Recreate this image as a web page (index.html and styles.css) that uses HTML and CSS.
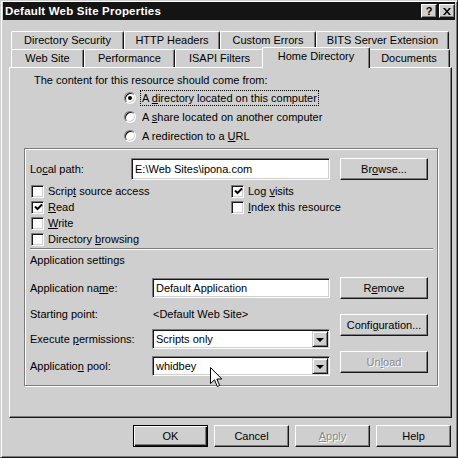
FILE: index.html
```html
<!DOCTYPE html>
<html>
<head>
<meta charset="utf-8">
<title>Default Web Site Properties</title>
<link rel="stylesheet" href="styles.css">
</head>
<body>
<div class="window">
  <div class="titlebar">
    <span class="title">Default Web Site Properties</span>
    <div class="caption-btns">
      <span class="cbtn help">?</span>
      <span class="cbtn close"><svg width="8" height="7" viewBox="0 0 8 7"><path d="M0 0h2l2 2.4L6 0h2L5 3.5 8 7H6L4 4.6 2 7H0l3-3.5z"/></svg></span>
    </div>
  </div>
  <div class="client">
    <div class="tabs">
      <div class="tab-row">
        <div class="tab w113">Directory Security</div>
        <div class="tab w96">HTTP Headers</div>
        <div class="tab w96">Custom Errors</div>
        <div class="tab w133">BITS Server Extension</div>
      </div>
      <div class="tab-row">
        <div class="tab w73">Web Site</div>
        <div class="tab w91">Performance</div>
        <div class="tab w89">ISAPI Filters</div>
        <div class="tab sel">Home Directory</div>
        <div class="tab w82">Documents</div>
      </div>
    </div>
    <div class="panel">
      <p class="intro">The content for this resource should come from:</p>
      <div class="radios">
        <div class="radio-row"><span class="radio on"></span><span class="focus">A <u>d</u>irectory located on this computer</span></div>
        <div class="radio-row"><span class="radio"></span><span class="rtext">A <u>s</u>hare located on another computer</span></div>
        <div class="radio-row"><span class="radio"></span><span class="rtext">A redirection to a <u>U</u>RL</span></div>
      </div>
      <div class="groupbox">
        <div class="path-row">
          <span class="path-label">Lo<u>c</u>al path:</span>
          <div class="field path-field">E:\Web Sites\ipona.com</div>
          <div class="btn side-btn"><span>Br<u>o</u>wse...</span></div>
        </div>
        <div class="checks">
          <div class="check"><span class="cb"></span><span>Scrip<u>t</u> source access</span></div>
          <div class="check"><span class="cb on"><svg width="9" height="9" viewBox="0 0 9 9"><path d="M1 3.5l2.5 2.5L8 1.5" fill="none" stroke="#000" stroke-width="2"/></svg></span><span><u>R</u>ead</span></div>
          <div class="check"><span class="cb"></span><span><u>W</u>rite</span></div>
          <div class="check"><span class="cb"></span><span>Directory <u>b</u>rowsing</span></div>
          <div class="check"><span class="cb on"><svg width="9" height="9" viewBox="0 0 9 9"><path d="M1 3.5l2.5 2.5L8 1.5" fill="none" stroke="#000" stroke-width="2"/></svg></span><span>Log <u>v</u>isits</span></div>
          <div class="check"><span class="cb"></span><span><u>I</u>ndex this resource</span></div>
        </div>
        <div class="sep"></div>
        <div class="section-title">Application settings</div>
        <div class="app">
          <div class="app-grid">
            <span class="app-label">Application na<u>m</u>e:</span>
            <div class="field app-field">Default Application</div>
            <span class="app-label">Starting point:</span>
            <span class="app-value">&lt;Default Web Site&gt;</span>
            <span class="app-label">Execute <u>p</u>ermissions:</span>
            <div class="select"><span class="select-val">Scripts only</span><span class="drop"></span></div>
            <span class="app-label">Applicatio<u>n</u> pool:</span>
            <div class="select"><span class="select-val">whidbey</span><span class="drop"></span></div>
          </div>
          <div class="app-btns">
            <div class="btn side-btn"><span>R<u>e</u>move</span></div>
            <div class="btn side-btn"><span>Confi<u>g</u>uration...</span></div>
            <div class="btn side-btn disabled"><span>Un<u>l</u>oad</span></div>
          </div>
        </div>
      </div>
    </div>
    <div class="footer">
      <div class="btn foot-btn default">OK</div>
      <div class="btn foot-btn">Cancel</div>
      <div class="btn foot-btn disabled"><span><u>A</u>pply</span></div>
      <div class="btn foot-btn">Help</div>
    </div>
  </div>
  <svg class="cursor" width="13" height="21" viewBox="0 0 13 21"><path d="M0.5 0.5V16.5L4.5 12.8L7.3 19.5L9.6 18.5L6.9 12H11.8Z" fill="#fff" stroke="#000" stroke-width="1" stroke-linejoin="miter"/></svg>
</div>
</body>
</html>
```

FILE: styles.css
```css
* { box-sizing: border-box; }
html, body { margin: 0; padding: 0; }
body {
  width: 458px;
  height: 458px;
  overflow: hidden;
  background: #cfcfcf;
  font: 11px "Liberation Sans", Arial, sans-serif;
  color: #000;
}
u { text-decoration: underline; text-underline-offset: 1px; }

.window {
  position: relative;
  width: 458px;
  height: 458px;
  background: #cfcfcf;
  border: 1px solid;
  border-color: #cfcfcf #161616 #161616 #cfcfcf;
  box-shadow: inset 1px 1px 0 #fff, inset -1px -1px 0 #7c7c7c;
  padding: 1px 2px 2px 2px;
}

/* title bar */
.titlebar {
  height: 18px;
  background: #141414;
  color: #fff;
  display: flex;
  align-items: center;
  justify-content: space-between;
  padding-left: 2px;
}
.title { font-weight: bold; font-size: 11.5px; letter-spacing: 0.2px; }
.caption-btns { display: flex; gap: 2px; }
.cbtn {
  width: 16px;
  height: 14px;
  background: #cfcfcf;
  border: 1px solid;
  border-color: #fff #161616 #161616 #fff;
  box-shadow: inset -1px -1px 0 #7c7c7c;
  color: #000;
  display: flex;
  align-items: center;
  justify-content: center;
  font-weight: bold;
  font-size: 11px;
  line-height: 12px;
}

/* client area */
.client { padding: 11px 3px 0 6px; }
.tabs { padding-left: 2px; }
.tab-row { display: flex; height: 18px; }
.tab {
  height: 18px;
  border: 1px solid;
  border-bottom: none;
  border-color: #fff #161616 #fff #fff;
  box-shadow: inset -1px 0 0 #7c7c7c;
  border-radius: 2px 2px 0 0;
  background: #cfcfcf;
  text-align: center;
  line-height: 16px;
  white-space: nowrap;
}
.w113 { width: 113px; }
.w96 { width: 96px; }
.w133 { width: 133px; }
.w73 { width: 73px; }
.w91 { width: 91px; }
.w89 { width: 89px; }
.w82 { width: 82px; }
.tab.sel {
  width: 108px;
  height: 21px;
  margin: -2px -2px 0 -2px;
  position: relative;
  z-index: 2;
  line-height: 17px;
}

.panel {
  height: 351px;
  border: 1px solid;
  border-color: #fff #161616 #161616 #fff;
  box-shadow: inset -1px -1px 0 #7c7c7c;
  padding: 5px 13px 0 14px;
}
.intro { margin: 0; padding-left: 10px; line-height: 14px; height: 14px; }
.radios { padding-left: 100px; margin-top: 1px; }
.radio-row { display: flex; align-items: center; height: 19px; }
.radio {
  width: 12px;
  height: 12px;
  border-radius: 50%;
  background: #fff;
  border: 1px solid;
  border-color: #7c7c7c #fff #fff #7c7c7c;
  box-shadow: inset 1px 1px 0 #161616, inset -1px -1px 0 #cfcfcf;
  margin-right: 4px;
  position: relative;
  flex: none;
}
.radio.on::after {
  content: "";
  position: absolute;
  left: 3px;
  top: 3px;
  width: 4px;
  height: 4px;
  border-radius: 50%;
  background: #000;
}
.focus {
  border: 1px dotted #000;
  padding: 0 1px 0 1px;
  line-height: 14px;
}
.rtext { padding-left: 2px; }

/* group box */
.groupbox {
  margin-top: 3px;
  width: 414px;
  height: 238px;
  border: 1px solid #7c7c7c;
  box-shadow: inset 1px 1px 0 #fff, 1px 1px 0 #fff;
  padding: 9px 4px 0 5px;
}
.path-row { display: flex; align-items: center; height: 22px; }
.path-label { width: 101px; }
.field {
  background: #fff;
  border: 1px solid;
  border-color: #7c7c7c #fff #fff #7c7c7c;
  box-shadow: inset 1px 1px 0 #161616, inset -1px -1px 0 #cfcfcf;
  padding: 0 3px;
  display: flex;
  align-items: center;
  white-space: nowrap;
}
.path-field { width: 199px; height: 22px; }
.btn {
  background: #cfcfcf;
  border: 1px solid;
  border-color: #fff #161616 #161616 #fff;
  box-shadow: inset -1px -1px 0 #7c7c7c;
  display: flex;
  align-items: center;
  justify-content: center;
  white-space: nowrap;
  height: 22px;
}
.side-btn { width: 88px; margin-left: 10px; }
.btn.disabled { color: #8a8a8a; text-shadow: 1px 1px 0 #fff; }

.checks {
  margin-top: 3px;
  display: grid;
  grid-template-columns: 200px auto;
  grid-template-rows: repeat(4, 16px);
  grid-auto-flow: column;
}
.check { display: flex; align-items: center; padding-left: 1px; white-space: nowrap; }
.cb {
  width: 13px;
  height: 13px;
  background: #fff;
  border: 1px solid;
  border-color: #7c7c7c #fff #fff #7c7c7c;
  box-shadow: inset 1px 1px 0 #161616, inset -1px -1px 0 #cfcfcf;
  margin-right: 4px;
  display: flex;
  align-items: center;
  justify-content: center;
  flex: none;
}
.cb svg { margin: 1px 0 0 1px; }

.sep {
  margin-top: 1px;
  height: 2px;
  border-top: 1px solid #7c7c7c;
  border-bottom: 1px solid #fff;
}
.section-title { margin-top: 3px; line-height: 14px; height: 14px; }

.app { display: flex; margin-top: 10px; }
.app-grid {
  margin-top: 1px;
  display: grid;
  grid-template-columns: 122px 178px;
  grid-template-rows: 20px 17px 20px 20px;
  row-gap: 7px;
  align-items: center;
}
.app-label { white-space: nowrap; }
.app-field { height: 20px; }
.app-value { padding-left: 1px; }
.select {
  height: 20px;
  background: #fff;
  border: 1px solid;
  border-color: #7c7c7c #fff #fff #7c7c7c;
  box-shadow: inset 1px 1px 0 #161616, inset -1px -1px 0 #cfcfcf;
  padding: 1px 1px 1px 3px;
  display: flex;
  align-items: center;
  justify-content: space-between;
}
.drop {
  width: 16px;
  height: 16px;
  background: #cfcfcf;
  border: 1px solid;
  border-color: #cfcfcf #161616 #161616 #cfcfcf;
  box-shadow: inset 1px 1px 0 #fff, inset -1px -1px 0 #7c7c7c;
  display: flex;
  align-items: center;
  justify-content: center;
}
.drop::after {
  content: "";
  border-top: 4px solid #000;
  border-left: 4px solid transparent;
  border-right: 4px solid transparent;
  margin-top: 1px;
}
.app-btns { display: flex; flex-direction: column; gap: 15px; }

.footer {
  margin-top: 7px;
  padding-right: 1px;
  display: flex;
  justify-content: flex-end;
  gap: 6px;
}
.foot-btn { width: 75px; height: 22px; }
.btn.default {
  border: 1px solid #000;
  box-shadow: inset 1px 1px 0 #fff, inset -1px -1px 0 #161616, inset -2px -2px 0 #7c7c7c;
}

.cursor { position: absolute; left: 209px; top: 366px; }
```
